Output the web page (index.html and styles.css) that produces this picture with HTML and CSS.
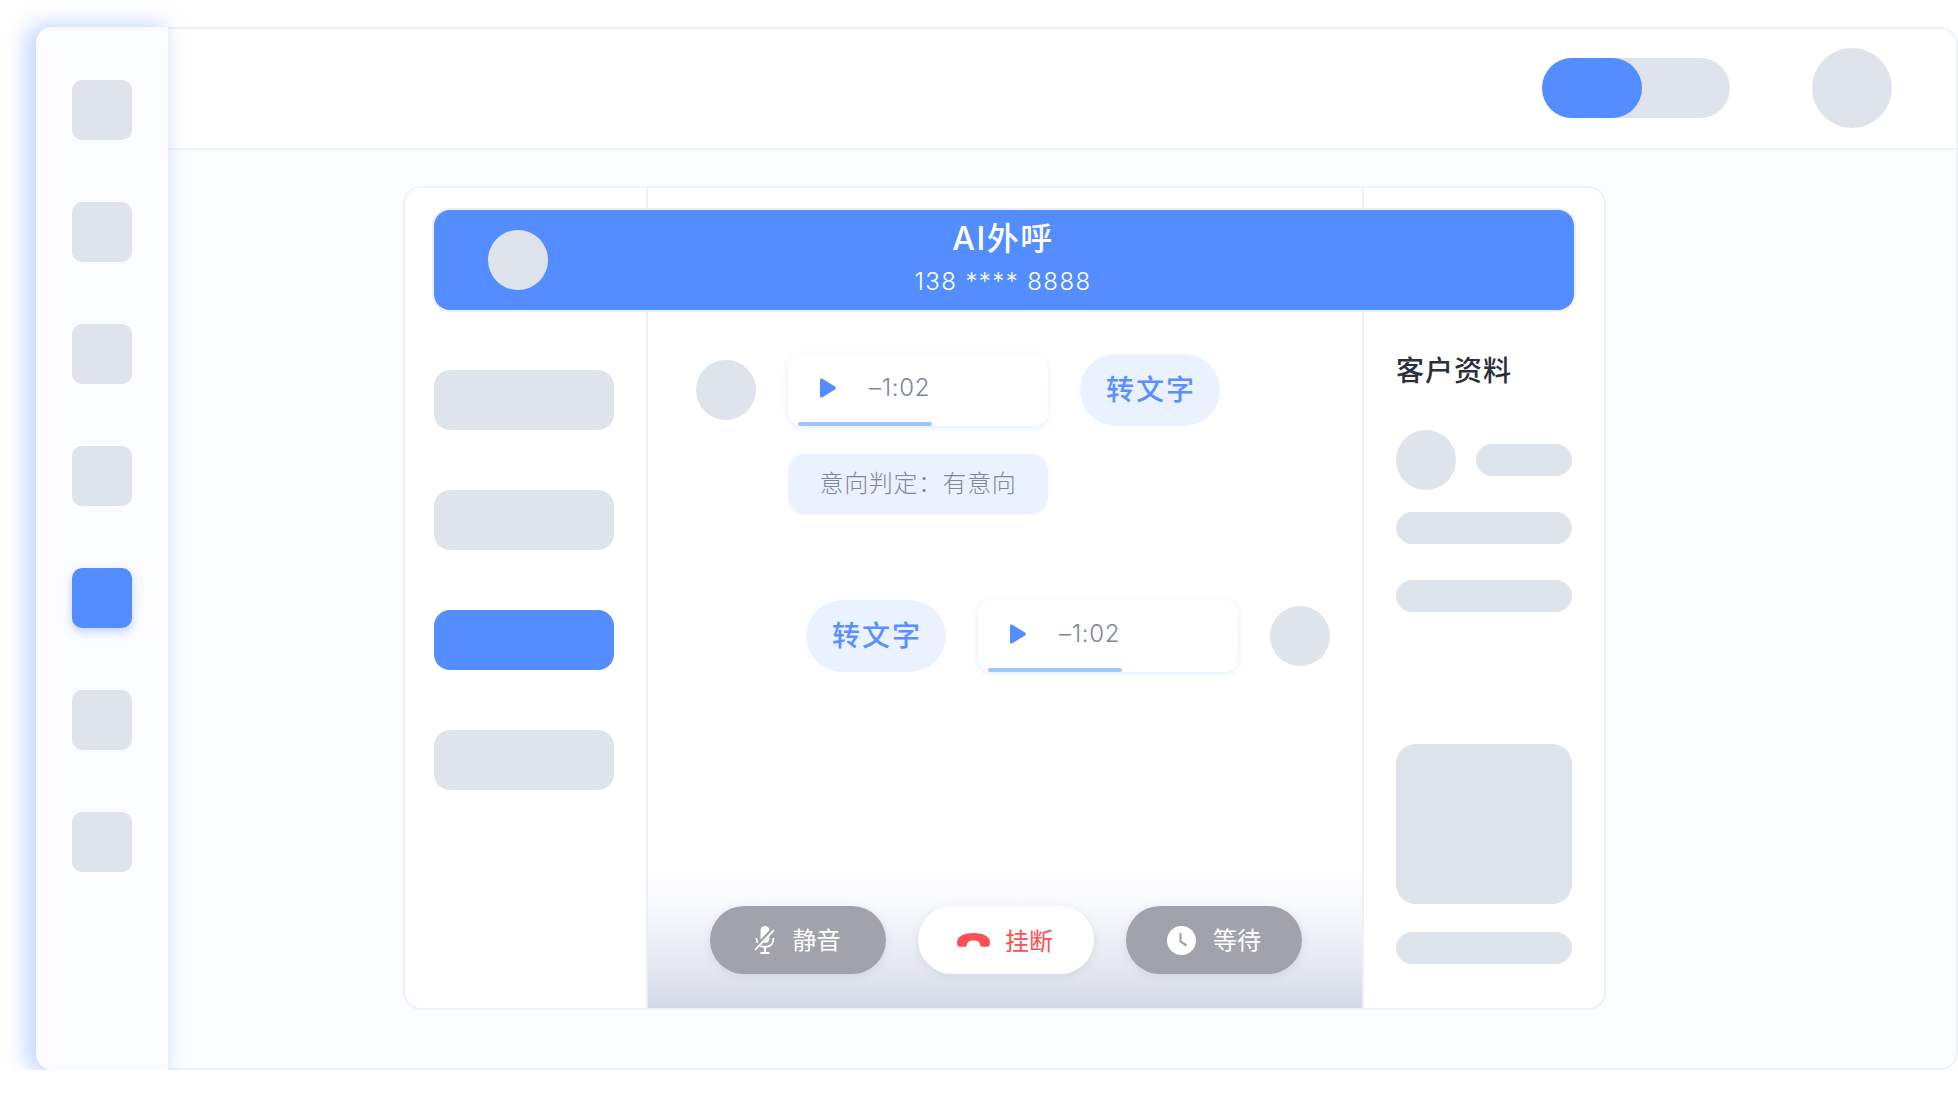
FILE: index.html
```html
<!DOCTYPE html>
<html lang="zh-CN">
<head>
    <meta charset="UTF-8">
    <meta name="viewport" content="width=device-width, initial-scale=1.0">
    <title>AI外呼</title>
    <link rel="stylesheet" href="styles.css">
</head>
<body>
    <div class="app">
        <aside class="sidebar">
            <div class="side-item"></div>
            <div class="side-item"></div>
            <div class="side-item"></div>
            <div class="side-item"></div>
            <div class="side-item active"></div>
            <div class="side-item"></div>
            <div class="side-item"></div>
        </aside>

        <div class="main">
            <header class="topbar">
                <div class="toggle"><div class="toggle-on"></div></div>
                <div class="top-avatar"></div>
            </header>

            <section class="content">
                <div class="card">
                    <div class="banner">
                        <div class="banner-avatar"></div>
                        <div class="banner-text">
                            <div class="banner-title">AI外呼</div>
                            <div class="banner-phone">138 **** 8888</div>
                        </div>
                    </div>

                    <div class="col-left">
                        <div class="nav-pill"></div>
                        <div class="nav-pill"></div>
                        <div class="nav-pill active"></div>
                        <div class="nav-pill"></div>
                    </div>

                    <div class="col-chat">
                        <div class="messages">
                            <div class="msg">
                                <div class="avatar"></div>
                                <div class="msg-body">
                                    <div class="msg-line">
                                        <div class="audio">
                                            <svg class="play" viewBox="0 0 16 20"><path d="M2 0.6 L15 8.6 Q16.5 10 15 11.4 L2 19.4 Q0 20.2 0 18 L0 2 Q0 -0.2 2 0.6 Z"/></svg>
                                            <span class="time">–1:02</span>
                                            <div class="progress"></div>
                                        </div>
                                        <div class="to-text">转文字</div>
                                    </div>
                                    <div class="intent">意向判定：有意向</div>
                                </div>
                            </div>

                            <div class="msg msg-right">
                                <div class="to-text">转文字</div>
                                <div class="audio">
                                    <svg class="play" viewBox="0 0 16 20"><path d="M2 0.6 L15 8.6 Q16.5 10 15 11.4 L2 19.4 Q0 20.2 0 18 L0 2 Q0 -0.2 2 0.6 Z"/></svg>
                                    <span class="time">–1:02</span>
                                    <div class="progress"></div>
                                </div>
                                <div class="avatar"></div>
                            </div>
                        </div>

                        <div class="controls">
                            <div class="ctrl ctrl-mute">
                                <svg class="ctrl-icon" viewBox="0 0 22 28" fill="none" stroke="#fff">
                                    <rect x="6.5" y="0" width="9" height="17" rx="4.5" fill="#fff" stroke="none"/>
                                    <path d="M2.5 12 C2.5 18 6 21 11 21 C16 21 19.5 18 19.5 12" stroke-width="1.8"/>
                                    <path d="M11 21 V26" stroke-width="2"/>
                                    <path d="M6.5 27 H15.5" stroke-width="2"/>
                                    <path d="M19.5 3 L0.5 23" stroke="#a0a3ab" stroke-width="4.2"/>
                                    <path d="M20 4 L1 24" stroke-width="1.8"/>
                                </svg>
                                <span class="ctrl-label">静音</span>
                            </div>
                            <div class="ctrl ctrl-hangup">
                                <svg class="ctrl-icon hangup-icon" viewBox="0 0 33 14"><path d="M16.5 0 C8 0 2.5 2.8 0.6 6.4 C-0.2 8 0 11.6 0.6 12.7 C1 13.5 1.8 13.8 3 13.8 L7.6 13.8 C9 13.8 9.7 13 9.8 11.9 C10 9.6 12.3 7.6 16.5 7.6 C20.7 7.6 23 9.6 23.2 11.9 C23.3 13 24 13.8 25.4 13.8 L30 13.8 C31.2 13.8 32 13.5 32.4 12.7 C33 11.6 33.2 8 32.4 6.4 C30.5 2.8 25 0 16.5 0 Z"/></svg>
                                <span class="ctrl-label">挂断</span>
                            </div>
                            <div class="ctrl">
                                <svg class="ctrl-icon clock-icon" viewBox="0 0 29 29">
                                    <circle cx="14.5" cy="14.5" r="14.5" fill="#fff"/>
                                    <path d="M13.5 7 V15.5 L19.5 19.5" fill="none" stroke="#a0a3ab" stroke-width="2.2"/>
                                </svg>
                                <span class="ctrl-label">等待</span>
                            </div>
                        </div>
                    </div>

                    <div class="col-right">
                        <h2 class="info-title">客户资料</h2>
                        <div class="info-head">
                            <div class="avatar"></div>
                            <div class="bar bar-short"></div>
                        </div>
                        <div class="bar bar-one"></div>
                        <div class="bar bar-two"></div>
                        <div class="info-block"></div>
                        <div class="bar bar-last"></div>
                    </div>
                </div>
            </section>
        </div>
    </div>
</body>
</html>
```

FILE: styles.css
```css
* {
    box-sizing: border-box;
}
body {
    margin: 0;
    padding: 27px 0 0 36px;
    background-color: #fff;
    font-family: Inter, "Noto Sans CJK SC", sans-serif;
    overflow: hidden;
}
.app {
    display: flex;
    width: 1922px;
    height: 1043px;
}
.sidebar {
    position: relative;
    z-index: 1;
    flex: none;
    width: 132px;
    padding: 53px 0 0 36px;
    display: flex;
    flex-direction: column;
    gap: 62px;
    background-color: #fbfcff;
    border-radius: 16px 0 0 16px;
    box-shadow: -7px 0 20px 4px rgba(84, 141, 255, 0.33);
}
.side-item {
    width: 60px;
    height: 60px;
    border-radius: 10px;
    background-color: #dfe3eb;
}
.side-item.active {
    background-color: #548dff;
    box-shadow: 0 4px 10px rgba(84, 141, 255, 0.35);
}
.main {
    flex: 1;
    display: flex;
    flex-direction: column;
    border: 2px solid #eef1f6;
    border-left: none;
    border-radius: 0 18px 18px 0;
    overflow: hidden;
}
.topbar {
    flex: none;
    height: 121px;
    padding: 0 64px 2px 0;
    display: flex;
    justify-content: flex-end;
    align-items: center;
    background-color: #fff;
    border-bottom: 2px solid #eef1f6;
}
.toggle {
    width: 188px;
    height: 60px;
    border-radius: 30px;
    background-color: #dfe3eb;
    margin-right: 82px;
}
.toggle-on {
    width: 100px;
    height: 60px;
    border-radius: 30px;
    background-color: #548dff;
}
.top-avatar {
    width: 80px;
    height: 80px;
    border-radius: 50%;
    background-color: #dfe3eb;
}
.content {
    flex: 1;
    padding: 36px 0 0 235px;
    background-color: #fbfcff;
}
.card {
    position: relative;
    width: 1203px;
    height: 824px;
    display: flex;
    background-color: #fff;
    border: 2px solid #eef1f6;
    border-radius: 18px;
}
.banner {
    position: absolute;
    z-index: 1;
    left: 29px;
    top: 22px;
    width: 1140px;
    height: 100px;
    display: flex;
    align-items: center;
    padding-left: 54px;
    background-color: #548dff;
    border-radius: 16px;
    box-shadow: 0 0 0 2px #eef1f6;
    color: #fff;
}
.banner-avatar {
    width: 60px;
    height: 60px;
    border-radius: 50%;
    background-color: #dfe3eb;
}
.banner-text {
    position: absolute;
    left: 0;
    right: 0;
    top: 9px;
    padding-right: 2px;
    text-align: center;
}
.banner-title {
    font-size: 32px;
    font-weight: 500;
    line-height: 40px;
    letter-spacing: 1.5px;
}
.banner-phone {
    font-size: 24px;
    font-weight: 300;
    line-height: 32px;
    margin-top: 7px;
    letter-spacing: 1.4px;
}
.col-left {
    flex: none;
    width: 241px;
    padding: 182px 0 0 29px;
    display: flex;
    flex-direction: column;
    gap: 60px;
}
.nav-pill {
    width: 180px;
    height: 60px;
    border-radius: 16px;
    background-color: #dfe3eb;
}
.nav-pill.active {
    background-color: #548dff;
}
.col-chat {
    flex: none;
    width: 718px;
    display: flex;
    flex-direction: column;
    justify-content: space-between;
    border-left: 2px solid #eef1f6;
    border-right: 2px solid #eef1f6;
}
.messages {
    padding: 166px 32px 0 48px;
    display: flex;
    flex-direction: column;
    gap: 86px;
}
.msg {
    display: flex;
    gap: 32px;
    align-items: flex-start;
}
.msg > .avatar {
    margin-top: 6px;
}
.msg-right {
    justify-content: flex-end;
}
.msg-line {
    display: flex;
    gap: 32px;
}
.avatar {
    flex: none;
    width: 60px;
    height: 60px;
    border-radius: 50%;
    background-color: #dfe3eb;
}
.audio {
    position: relative;
    flex: none;
    width: 260px;
    height: 72px;
    padding: 24px 0 0 32px;
    display: flex;
    align-items: flex-start;
    background-color: #fff;
    border-radius: 14px;
    box-shadow: 0 2px 6px rgba(84, 141, 255, 0.16);
}
.play {
    width: 16px;
    height: 20px;
    fill: #548dff;
}
.time {
    margin-left: 33px;
    margin-top: -5px;
    font-size: 24px;
    font-weight: 300;
    line-height: 30px;
    letter-spacing: 0.7px;
    color: #7d8799;
}
.progress {
    position: absolute;
    left: 10px;
    bottom: 0;
    width: 134px;
    height: 4px;
    border-radius: 2px;
    background-color: #a0c4ff;
}
.to-text {
    flex: none;
    width: 140px;
    height: 72px;
    padding-left: 2px;
    border-radius: 36px;
    background-color: #eaf1ff;
    color: #5a8fff;
    font-size: 28px;
    font-weight: 500;
    line-height: 72px;
    letter-spacing: 2px;
    text-align: center;
}
.intent {
    width: 260px;
    height: 60px;
    margin-top: 28px;
    border-radius: 16px;
    background-color: #ebf2ff;
    color: #7f8798;
    font-size: 24px;
    font-weight: 300;
    line-height: 60px;
    letter-spacing: 0.6px;
    text-align: center;
}
.controls {
    height: 136px;
    padding: 34px 0 0 2px;
    display: flex;
    justify-content: center;
    gap: 32px;
    background: linear-gradient(to bottom, #fdfdfe 0%, #f8f9fc 25%, #e3e6f0 75%, #d4d8e5 100%);
}
.ctrl {
    width: 176px;
    height: 68px;
    display: flex;
    justify-content: center;
    align-items: center;
    gap: 17px;
    border-radius: 34px;
    background-color: #a0a3ab;
    box-shadow: 0 2px 8px rgba(100, 110, 150, 0.14);
    color: #fff;
    font-size: 24px;
}
.ctrl-label {
    margin-bottom: 3px;
}
.ctrl-icon {
    flex: none;
    width: 22px;
    height: 28px;
}
.ctrl-mute {
    padding-right: 2px;
}
.ctrl-hangup {
    gap: 15px;
    padding-right: 2px;
    background-color: #fff;
    color: #ff4f55;
}
.ctrl-hangup .ctrl-label {
    margin-bottom: 1px;
}
.hangup-icon {
    width: 33px;
    height: 14px;
    fill: #ff4f55;
}
.clock-icon {
    width: 29px;
    height: 29px;
}
.col-right {
    flex: 1;
    padding: 163px 0 0 32px;
}
.info-title {
    margin: 0;
    font-size: 28px;
    font-weight: 500;
    line-height: 40px;
    letter-spacing: 1px;
    color: #2a2f3a;
}
.info-head {
    margin-top: 39px;
    display: flex;
    align-items: center;
    gap: 20px;
}
.bar {
    height: 32px;
    border-radius: 16px;
    background-color: #dfe3eb;
}
.bar-short {
    width: 96px;
}
.bar-one {
    width: 176px;
    margin-top: 22px;
}
.bar-two {
    width: 176px;
    margin-top: 36px;
}
.info-block {
    width: 176px;
    height: 160px;
    margin-top: 132px;
    border-radius: 20px;
    background-color: #dfe3eb;
}
.bar-last {
    width: 176px;
    margin-top: 28px;
}
```
